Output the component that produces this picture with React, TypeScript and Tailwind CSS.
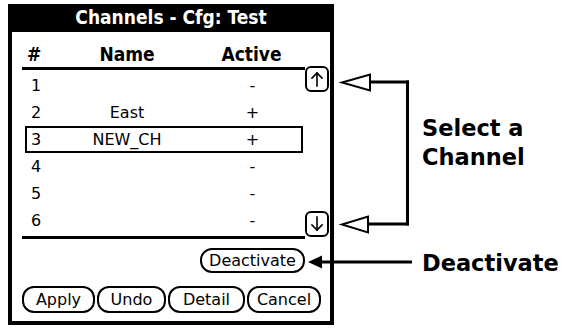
import React from "react";

const rows = [
  { n: "1", name: "", a: "-" },
  { n: "2", name: "East", a: "+" },
  { n: "3", name: "NEW_CH", a: "+", sel: true },
  { n: "4", name: "", a: "-" },
  { n: "5", name: "", a: "-" },
  { n: "6", name: "", a: "-" },
];

function ScrollBtn({ up }: { up?: boolean }) {
  return (
    <div className="w-[24px] h-[26px] rounded-[6px] border-2 border-black flex items-center justify-center bg-white">
      <svg width="16" height="18" viewBox="0 0 16 18" fill="none" stroke="black" strokeWidth="1.6" strokeLinecap="square">
        {up ? (
          <>
            <line x1="8" y1="3" x2="8" y2="16" />
            <polyline points="3,8 8,3 13,8" />
          </>
        ) : (
          <>
            <line x1="8" y1="2" x2="8" y2="15" />
            <polyline points="3,10 8,15 13,10" />
          </>
        )}
      </svg>
    </div>
  );
}

function PalmBtn({ label, w, h }: { label: string; w: string; h: string }) {
  return (
    <div
      className={`${w} ${h} rounded-[12px] border-2 border-black flex items-center justify-center text-[16px] leading-none text-black`}
    >
      {label}
    </div>
  );
}

export default function App() {
  const dev = { fontFamily: '"DejaVu Sans", sans-serif' };
  const devBold = { fontFamily: '"DejaVu Sans Condensed", "DejaVu Sans", sans-serif' };
  return (
    <div className="relative w-[564px] h-[329px] bg-white overflow-hidden flex">
      {/* Device */}
      <div
        className="ml-[8px] mt-[4px] w-[326px] h-[321px] border-x-4 border-b-4 border-black flex flex-col"
        style={dev}
      >
        <div
          className="h-[28px] bg-black text-white flex items-center justify-center text-[19px] font-bold leading-none pb-[1px]"
          style={devBold}
        >
          Channels - Cfg: Test
        </div>
        <div className="flex-1 flex flex-col pl-[10px]">
          <div className="flex">
            {/* table */}
            <div className="w-[283px] flex flex-col">
              <div
                className="h-[38px] border-b-[3px] border-black grid grid-cols-[38px_134px_1fr] items-end pb-[3px] text-[19px] font-bold leading-[20px]"
                style={devBold}
              >
                <div className="pl-[5px]">#</div>
                <div className="text-center">Name</div>
                <div className="text-center pl-[4px]">Active</div>
              </div>
              <div className="pt-[2px] flex flex-col">
                {rows.map((r) => (
                  <div
                    key={r.n}
                    className={`ml-[3px] mr-[2px] h-[27px] border-2 ${
                      r.sel ? "border-black" : "border-transparent"
                    } grid grid-cols-[33px_134px_1fr] items-center text-[16px] leading-none`}
                  >
                    <div className="pl-[4px]">{r.n}</div>
                    <div className="text-center">{r.name}</div>
                    <div className="text-center pl-[10px]">{r.a}</div>
                  </div>
                ))}
              </div>
              <div className="mt-[2px] h-[3px] bg-black" />
            </div>
            {/* scroll column */}
            <div className="w-[25px] flex flex-col justify-between pt-[34px] pb-[2px]">
              <ScrollBtn up />
              <ScrollBtn />
            </div>
          </div>
          <div className="w-[283px] flex justify-end mt-[9px]">
            <PalmBtn label="Deactivate" w="w-[105px]" h="h-[25px]" />
          </div>
          <div className="flex gap-[2px] mt-[13px]">
            <PalmBtn label="Apply" w="w-[73px]" h="h-[27px]" />
            <PalmBtn label="Undo" w="w-[69px]" h="h-[27px]" />
            <PalmBtn label="Detail" w="w-[77px]" h="h-[27px]" />
            <PalmBtn label="Cancel" w="w-[74px]" h="h-[27px]" />
          </div>
        </div>
      </div>

      {/* Annotations text */}
      <div
        className="pl-[88px] pt-[114px] flex flex-col text-[22.5px] leading-[29px] font-bold text-black"
        style={{ fontFamily: '"DejaVu Sans", Verdana, sans-serif' }}
      >
        <div className="whitespace-nowrap">Select a</div>
        <div className="whitespace-nowrap">Channel</div>
        <div className="whitespace-nowrap mt-[77px] -ml-[0px]">Deactivate</div>
      </div>

      {/* Connector drawing */}
      <svg
        className="absolute inset-0 pointer-events-none"
        width="564"
        height="329"
        viewBox="0 0 564 329"
      >
        <polygon points="342,82.5 370,74.5 370,90.5" fill="white" stroke="black" strokeWidth="2" />
        <line x1="370" y1="82" x2="409" y2="82" stroke="black" strokeWidth="3" />
        <line x1="407.5" y1="80.5" x2="407.5" y2="225.5" stroke="black" strokeWidth="3" />
        <line x1="368" y1="224" x2="409" y2="224" stroke="black" strokeWidth="3" />
        <polygon points="342,224.5 368,216.5 368,232.5" fill="white" stroke="black" strokeWidth="2" />
        <polygon points="308,262 322,255.5 322,268.5" fill="black" />
        <line x1="320" y1="262" x2="412" y2="262" stroke="black" strokeWidth="3" />
      </svg>
    </div>
  );
}
